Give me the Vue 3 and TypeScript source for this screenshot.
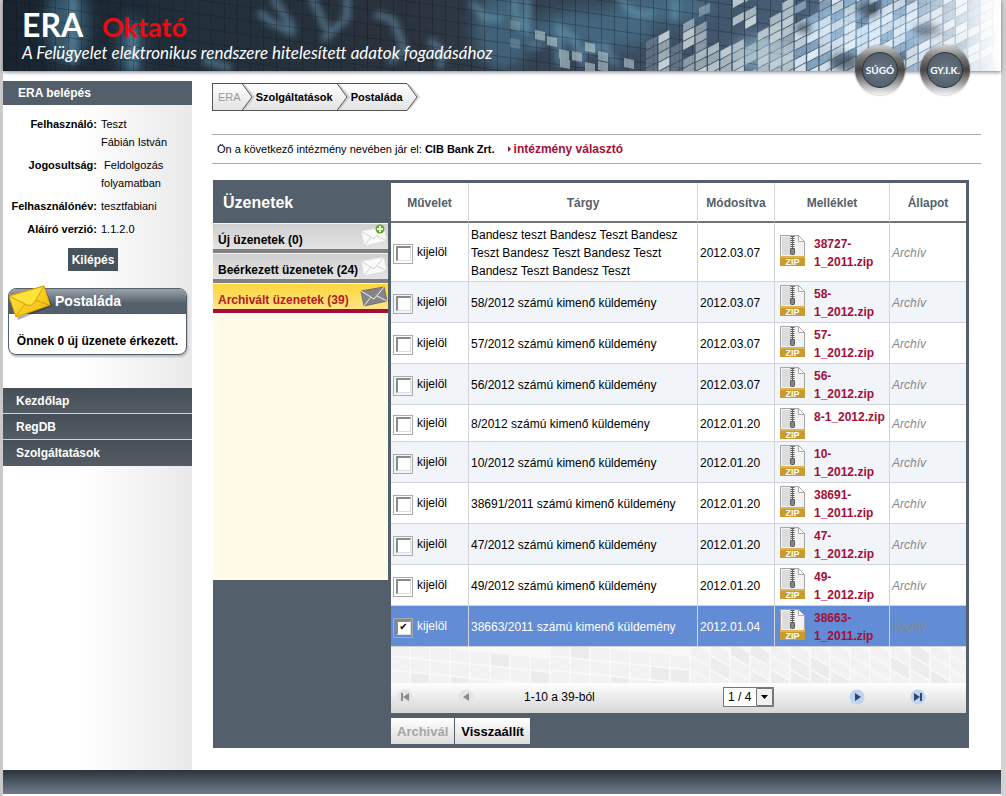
<script setup lang="ts">
import { ref } from 'vue'

interface Message {
  id: number
  subject: string
  modified: string
  file: string
  selected: boolean
}

interface Tile {
  points: string
  fill: string
  opacity: number
}

const messages = ref<Message[]>([
  { id: 1, subject: 'Bandesz teszt Bandesz Teszt Bandesz Teszt Bandesz Teszt Bandesz Teszt Bandesz Teszt Bandesz Teszt', modified: '2012.03.07', file: '38727-1_2011.zip', selected: false },
  { id: 2, subject: '58/2012 számú kimenő küldemény', modified: '2012.03.07', file: '58-1_2012.zip', selected: false },
  { id: 3, subject: '57/2012 számú kimenő küldemény', modified: '2012.03.07', file: '57-1_2012.zip', selected: false },
  { id: 4, subject: '56/2012 számú kimenő küldemény', modified: '2012.03.07', file: '56-1_2012.zip', selected: false },
  { id: 5, subject: '8/2012 számú kimenő küldemény', modified: '2012.01.20', file: '8-1_2012.zip', selected: false },
  { id: 6, subject: '10/2012 számú kimenő küldemény', modified: '2012.01.20', file: '10-1_2012.zip', selected: false },
  { id: 7, subject: '38691/2011 számú kimenő küldemény', modified: '2012.01.20', file: '38691-1_2011.zip', selected: false },
  { id: 8, subject: '47/2012 számú kimenő küldemény', modified: '2012.01.20', file: '47-1_2012.zip', selected: false },
  { id: 9, subject: '49/2012 számú kimenő küldemény', modified: '2012.01.20', file: '49-1_2012.zip', selected: false },
  { id: 10, subject: '38663/2011 számú kimenő küldemény', modified: '2012.01.04', file: '38663-1_2011.zip', selected: true },
])

const folders = [
  { label: 'Új üzenetek (0)', kind: 'new', active: false },
  { label: 'Beérkezett üzenetek (24)', kind: 'inbox', active: false },
  { label: 'Archivált üzenetek (39)', kind: 'archive', active: true },
]

const crumbs = ['ERA', 'Szolgáltatások', 'Postaláda']
const menu = ['Kezdőlap', 'RegDB', 'Szolgáltatások']
const page = ref('1 / 4')

function noise(a: number, b: number): number {
  const v = Math.sin(a * 12.9898 + b * 78.233) * 43758.5453
  return v - Math.floor(v)
}

// First visible height of the mosaic in each 12px column of the banner
const tops = [39, 23, 40, 20, 25, 40, 37, -9, -9, 26, 12, 1, 4, 8, -9, -9, -9, -9, -9, -9, -9, -9, -9, -9, -9, -9, -9, -9, -9]

const tiles: Tile[] = []
tops.forEach((top, c) => {
  const x = 643 + c * 12.4
  for (let r = -1; r < 11; r++) {
    const y = r * 9 - ((c * 6) % 9)
    if (y < top - 4) continue
    const n = noise(c + 1, r + 3)
    if (n < 0.06 || ((c === 7 || c === 8) && y > 18 && y < 36)) continue
    tiles.push({
      points: `${x},${y + 6} ${x + 11},${y} ${x + 11},${y + 8} ${x},${y + 14}`,
      fill: c < 12 ? '#cbd6da' : n > 0.45 ? '#e6f2fc' : '#a9c9e4',
      opacity: c === 0 || c === 2 ? 0.25 : 0.5 + n * 0.45,
    })
  }
})
const strays = [[507, 20], [507, 38], [532, 30], [544, 36], [556, 49], [557, 58], [569, 51], [582, 42], [582, 62], [595, 51], [595, 61], [621, 58]]
strays.forEach(([x, y], i) => {
  tiles.push({ points: `${x},${y} ${x + 10},${y + 2} ${x + 10},${y + 11} ${x},${y + 9}`, fill: '#b9cbd2', opacity: i < 2 ? 0.25 : 0.6 })
})
tiles.push({ points: '696,8 707,3 707,12 696,17', fill: '#aebdc8', opacity: 0.5 })

const strip: Tile[] = []
for (let c = 0; c < 30; c++) {
  for (let r = 0; r < 3; r++) {
    const n = noise(c + 9, r + 5)
    const x = c * 20
    const y = r * 14 - 4 + (c < 15 ? (c % 8) * 2 : 0)
    const slope = c < 15 ? 2 : 10
    strip.push({ points: `${x},${y} ${x + 18},${y + slope} ${x + 18},${y + slope + 12} ${x},${y + 12}`, fill: n > 0.4 ? '#f2f2f2' : '#ececec', opacity: 1 })
  }
}
</script>

<template>
  <div class="page">
    <header class="banner">
      <svg class="art" viewBox="0 0 998 71" preserveAspectRatio="xMaxYMid slice" aria-hidden="true">
        <defs>
          <linearGradient id="sky" x1="0" x2="1" y1="0" y2="0">
            <stop offset="0" stop-color="#18232e" />
            <stop offset=".2" stop-color="#22303c" />
            <stop offset=".4" stop-color="#2a323d" />
            <stop offset=".62" stop-color="#3a4b5e" />
            <stop offset=".8" stop-color="#4a6077" />
            <stop offset="1" stop-color="#7893ab" />
          </linearGradient>
          <linearGradient id="fade" x1="0" x2="1" y1="0" y2="0">
            <stop offset="0" stop-color="#fff" stop-opacity="0" />
            <stop offset="1" stop-color="#fff" />
          </linearGradient>
          <pattern id="grid" width="13" height="14" patternUnits="userSpaceOnUse" patternTransform="skewY(8)">
            <path d="M0 0H13M0 0V14" stroke="#0c131b" stroke-opacity=".6" fill="none" />
          </pattern>
          <filter id="soft" x="-20%" y="-50%" width="140%" height="200%"><feGaussianBlur stdDeviation="3" /></filter>
          <filter id="softer" x="-20%" y="-50%" width="140%" height="200%"><feGaussianBlur stdDeviation="7" /></filter>
        </defs>
        <rect width="998" height="71" fill="url(#sky)" />
        <g filter="url(#softer)" fill="#4d809d" opacity=".55">
          <ellipse cx="64" cy="25" rx="22" ry="40" />
          <ellipse cx="128" cy="48" rx="12" ry="30" />
          <ellipse cx="500" cy="30" rx="30" ry="40" />
          <ellipse cx="590" cy="30" rx="60" ry="20" />
          <ellipse cx="660" cy="8" rx="50" ry="14" />
          <ellipse cx="760" cy="55" rx="30" ry="20" fill="#9ac2dc" />
          <ellipse cx="865" cy="30" rx="60" ry="20" fill="#9cc5e8" />
        </g>
        <g filter="url(#soft)" fill="none" stroke="#6fa0ba" stroke-width="7" opacity=".55">
          <path d="M256 12l12 10 24 12M270 -2l20 30M308 -4l16 34M320 40l24-22V-4M372 14l18 6 12 30-16 12M426 40l12 10v18M468 2l14 16h18M200 60l28 8M70 -2v66M130 30v40" />
          <path d="M512 -4v22l12 12V-4M526 45h14M556 66V28l16 12 8 26M580 52l22-6 12 20M616 -2l16 16h20M672 -2v22" />
        </g>
        <rect width="998" height="71" fill="url(#grid)" />
        <polygon v-for="(t, i) in tiles" :key="i" :points="t.points" :fill="t.fill" :fill-opacity="t.opacity" />
        <g filter="url(#soft)" fill="#27313d" opacity=".6">
          <ellipse cx="866" cy="10" rx="11" ry="8" />
          <ellipse cx="842" cy="62" rx="14" ry="9" />
          <ellipse cx="800" cy="28" rx="8" ry="6" />
          <ellipse cx="925" cy="30" rx="14" ry="6" />
        </g>
        <rect x="900" width="98" height="71" fill="url(#fade)" />
      </svg>
      <div class="brand">
        <h1>ERA <span>Oktató</span></h1>
        <p>A Felügyelet elektronikus rendszere hitelesített adatok fogadásához</p>
      </div>
      <nav class="help" aria-label="Segítség">
        <a href="#sugo"><span>SÚGÓ</span></a>
        <a href="#gyik"><span>GY.I.K.</span></a>
      </nav>
    </header>

    <div class="body">
      <aside class="sidebar">
        <h2>ERA belépés</h2>
        <dl>
          <dt>Felhasználó:</dt>
          <dd>Teszt<br />Fábián István</dd>
          <dt>Jogosultság:</dt>
          <dd>&nbsp;Feldolgozás<br />folyamatban</dd>
          <dt>Felhasználónév:</dt>
          <dd>tesztfabiani</dd>
          <dt>Aláíró verzió:</dt>
          <dd>1.1.2.0</dd>
        </dl>
        <button type="button" class="logout">Kilépés</button>
        <section class="mailbox">
          <h3>Postaláda</h3>
          <svg class="letter" width="44" height="36" viewBox="0 0 44 36" aria-hidden="true">
            <defs>
              <linearGradient id="gold" x1="0" y1="0" x2="1" y2="1">
                <stop offset="0" stop-color="#ffe94a" />
                <stop offset="1" stop-color="#f2b705" />
              </linearGradient>
            </defs>
            <path d="M3 12L37 2L44 21L10 35Z" fill="#000" fill-opacity=".3" />
            <path d="M1 11L36 1L42 20L8 32Z" fill="url(#gold)" stroke="#e0a800" />
            <path d="M8 31L18 18M41 20L27 15" fill="none" stroke="#d99c00" />
            <path d="M1 11L36 1L26 18Q23 22 19 20Z" fill="#ffe23a" stroke="#d79a00" />
          </svg>
          <p>Önnek 0 új üzenete érkezett.</p>
        </section>
        <nav class="menu" aria-label="Főmenü">
          <a v-for="m in menu" :key="m" href="#">{{ m }}</a>
        </nav>
      </aside>

      <main>
        <ol class="crumbs">
          <li v-for="(c, i) in crumbs" :key="c">
            <a href="#" :class="{ root: i === 0 }">{{ c }}</a>
            <svg width="14" height="28" viewBox="0 0 14 28" aria-hidden="true">
              <defs>
                <linearGradient id="crumb" x1="0" x2="0" y1="0" y2="1">
                  <stop offset="0" stop-color="#fff" />
                  <stop offset="1" stop-color="#e2e2e2" />
                </linearGradient>
              </defs>
              <path v-if="i < 2" d="M0 0H14V28H0Z" fill="url(#crumb)" />
              <path d="M3 2L13 14L3 26" fill="none" stroke="#bbb" stroke-width="2" opacity=".6" />
              <path d="M0 .5H1L11 14L1 27.5H0" fill="url(#crumb)" stroke="#555" />
              <path v-if="i < 2" d="M0 .5H14M0 27.5H14" stroke="#555" />
            </svg>
          </li>
        </ol>

        <p class="institution">
          Ön a következő intézmény nevében jár el: <strong>CIB Bank Zrt.</strong>
          <a href="#valaszto">intézmény választó</a>
        </p>

        <section class="frame">
          <nav class="folders" aria-label="Üzenetek">
            <h2>Üzenetek</h2>
            <ul>
              <li v-for="f in folders" :key="f.kind" :class="{ active: f.active }">
                <a href="#">
                  <span>{{ f.label }}</span>
                  <svg width="28" height="24" viewBox="0 0 28 24" aria-hidden="true">
                    <g :fill="f.active ? '#858585' : '#fafafa'" :stroke="f.active ? '#6e6e6e' : '#dedede'">
                      <path d="M1 7L24 3L27 17L4 22Z" />
                      <path d="M1 7L14 15L24 3M4 22L11 13M27 17L17 12" :stroke="f.active ? '#eee' : '#d2d2d2'" fill="none" />
                    </g>
                    <g v-if="f.kind === 'new'">
                      <circle cx="20" cy="5" r="4.500" fill="#67a52d" />
                      <path d="M20 2V8M17 5H23" stroke="#e6f4d8" stroke-width="2" />
                    </g>
                  </svg>
                </a>
              </li>
            </ul>
          </nav>

          <div class="list">
            <table>
              <colgroup>
                <col class="c-action" /><col /><col class="c-date" /><col class="c-file" /><col class="c-state" />
              </colgroup>
              <thead>
                <tr>
                  <th>Művelet</th><th>Tárgy</th><th>Módosítva</th><th>Melléklet</th><th>Állapot</th>
                </tr>
              </thead>
              <tbody>
                <tr v-for="m in messages" :key="m.id" :class="{ selected: m.selected }">
                  <td>
                    <label class="pick"><input v-model="m.selected" type="checkbox" /><span>kijelöl</span></label>
                  </td>
                  <td>{{ m.subject }}</td>
                  <td>{{ m.modified }}</td>
                  <td>
                    <a class="file" href="#">
                      <svg width="27" height="32" viewBox="0 0 27 32" aria-hidden="true">
                        <path d="M1.500 .5H19.500L25.500 6.500V30.500H1.500Z" fill="#f2f2f2" stroke="#a5a5a5" />
                        <path d="M3 2H12V20H3Z" fill="#dcdcdc" />
                        <path d="M19.500 .5V6.500H25.500Z" fill="#fff" stroke="#aaa" />
                        <path d="M13.500 1V14" stroke="#555" stroke-width="4" stroke-dasharray="1 1" />
                        <path d="M13.500 1V14" stroke="#666" />
                        <rect x="11.500" y="13.500" width="4" height="6" rx="1" fill="#888" stroke="#555" />
                        <path d="M1 21H26V31H1Z" fill="#c99a2e" />
                        <path d="M1 21H26V23H1Z" fill="#dcb34e" />
                        <text x="13.500" y="30" text-anchor="middle">ZIP</text>
                      </svg>
                      <span>{{ m.file }}</span>
                    </a>
                  </td>
                  <td class="state">Archív</td>
                </tr>
              </tbody>
            </table>

            <svg class="strip" viewBox="0 0 575 36" preserveAspectRatio="xMinYMin slice" aria-hidden="true">
              <polygon v-for="(t, i) in strip" :key="i" :points="t.points" :fill="t.fill" :fill-opacity="t.opacity" />
            </svg>

            <div class="pager">
              <button type="button" disabled aria-label="Első oldal">
                <svg width="16" height="16" viewBox="0 0 16 16"><circle cx="8" cy="8" r="7.500" fill="#e4e4e4" /><path d="M4 4H6V12H4ZM12 4V12L6 8Z" fill="#8b8b8b" /></svg>
              </button>
              <button type="button" disabled aria-label="Előző oldal">
                <svg width="16" height="16" viewBox="0 0 16 16"><circle cx="8" cy="8" r="7.500" fill="#e4e4e4" /><path d="M11 4V12L5 8Z" fill="#8b8b8b" /></svg>
              </button>
              <span class="range">1-10 a 39-ból</span>
              <span class="select">
                <select v-model="page" aria-label="Oldal">
                  <option>1 / 4</option><option>2 / 4</option><option>3 / 4</option><option>4 / 4</option>
                </select>
                <svg width="17" height="18" viewBox="0 0 17 18" aria-hidden="true"><path d="M.5 .5H16.500V17.500H.5Z" fill="#f0f0ee" stroke="#777" /><path d="M5 7H12L8.500 11Z" fill="#000" /></svg>
              </span>
              <button type="button" aria-label="Következő oldal">
                <svg width="16" height="16" viewBox="0 0 16 16"><circle cx="8" cy="8" r="7.500" fill="#bcd3f3" /><path d="M6 4V12L12 8Z" fill="#33475f" /></svg>
              </button>
              <button type="button" aria-label="Utolsó oldal">
                <svg width="16" height="16" viewBox="0 0 16 16"><circle cx="8" cy="8" r="7.500" fill="#bcd3f3" /><path d="M4 4V12L10 8ZM10 4H12V12H10Z" fill="#33475f" /></svg>
              </button>
            </div>

            <div class="actions">
              <button type="button" disabled>Archivál</button>
              <button type="button">Visszaállít</button>
            </div>
          </div>
        </section>
      </main>
    </div>

    <footer></footer>
  </div>
</template>

<style>
body {
  background: #fff;
}
</style>

<style scoped>
* {
  box-sizing: border-box;
}
.page {
  border: solid #c9c9c9;
  border-width: 0 5px 0 3px;
  border-right-color: #d2d2d2;
  padding-bottom: 2px;
  background: #fff;
  font: 12px/18px "Liberation Sans", Arial, sans-serif;
  color: #000;
}
h1, h2, h3, p, dl, dd, ul, ol {
  margin: 0;
  padding: 0;
}
ul, ol {
  list-style: none;
}
a {
  color: inherit;
  text-decoration: none;
}
button {
  font-family: inherit;
  border: 0;
  padding: 0;
}

.banner {
  position: relative;
  height: 71px;
  box-shadow: 0 1px 4px #777;
}
.art {
  position: absolute;
  width: 100%;
  height: 71px;
}
.brand {
  position: relative;
  padding: 8px 0 0 19px;
  font-family: Lato, sans-serif;
  color: #fff;
}
h1 {
  font-size: 32px;
  line-height: 34px;
}
h1 span {
  margin-left: 12px;
  font-size: 27px;
  color: #ed0b12;
}
.brand p {
  font-size: 17px;
  line-height: 18px;
  font-style: italic;
}
.help {
  position: absolute;
  top: 45px;
  right: 31px;
  display: flex;
  gap: 15px;
}
.help a {
  display: grid;
  width: 50px;
  height: 50px;
  padding: 7px;
  border-radius: 50%;
  background: linear-gradient(#d0d0d0, #777 25%, #444 50%, #8a8a8a 70%, #f4f4f4);
  box-shadow: 0 0 2px #888;
}
.help span {
  display: grid;
  place-items: center;
  border: 1px solid #2c3138;
  border-radius: 50%;
  background: radial-gradient(#6b7885, #4b5662);
  color: #fff;
  font: bold 10px/14px Lato, sans-serif;
}

.body {
  display: flex;
  padding-top: 10px;
}
.sidebar {
  flex: 0 0 189px;
  background: linear-gradient(90deg, #fff 40%, #e9e9e9);
}
.sidebar h2 {
  padding: 1px 15px 0;
  background: #535f6a;
  color: #fff;
  font-size: 12px;
  line-height: 23px;
}
dl {
  display: grid;
  grid-template-columns: 94px 1fr;
  gap: 5px 4px;
  padding-top: 10px;
  font-size: 11px;
}
dt {
  font-weight: bold;
  text-align: right;
  white-space: nowrap;
}
.logout {
  display: block;
  width: 50px;
  height: 23px;
  margin: 10px 0 0 65px;
  background: #48525b;
  color: #fff;
  font-size: 12px;
  font-weight: bold;
}
.mailbox {
  position: relative;
  margin: 17px 5px 0;
  border: 1px solid #535f6a;
  border-radius: 8px;
  background: #fff;
  box-shadow: 1px 2px 2px #bbb;
}
.mailbox h3 {
  padding-left: 46px;
  border-radius: 7px 7px 0 0;
  background: linear-gradient(#9aa1a9, #535f6a 60%);
  color: #fff;
  font: bold 14px/25px "Liberation Sans", sans-serif;
}
.letter {
  position: absolute;
  top: -4px;
  left: -1px;
}
.mailbox p {
  padding: 18px 0 4px;
  text-align: center;
  font-weight: bold;
}
.menu {
  margin-top: 33px;
}
.menu a {
  display: block;
  padding: 2px 0 0 13px;
  border-bottom: 1px solid #cfd3d6;
  background: linear-gradient(#464f57, #535c65);
  color: #fff;
  font-weight: bold;
  line-height: 23px;
}
.menu a:last-child {
  border-bottom: 0;
  padding-bottom: 1px;
}

main {
  flex: 1;
  min-width: 0;
  padding: 2px 20px 22px;
}
.crumbs {
  display: flex;
}
.crumbs li {
  display: flex;
  font-size: 11px;
}
.crumbs a {
  padding: 1px 3px 0 1px;
  border: solid #555;
  border-width: 1px 0;
  background: linear-gradient(#fff, #e2e2e2);
  font-weight: bold;
  line-height: 25px;
}
.crumbs .root {
  padding: 1px 0 0 5px;
  border-left-width: 1px;
  color: #999;
  font-weight: normal;
}
.institution {
  margin-top: 23px;
  padding: 5px;
  border: solid #aaa;
  border-width: 1px 0;
  font-size: 11px;
}
.institution a {
  margin-left: 13px;
  color: #a30f37;
  font-size: 12px;
  font-weight: bold;
}
.institution a::before {
  content: "";
  display: inline-block;
  margin: 0 3px 1px 0;
  border: solid transparent;
  border-width: 3px 0 3px 3px;
  border-left-color: #a30f37;
}

.frame {
  display: grid;
  grid-template-columns: 175px 1fr;
  gap: 3px;
  margin: 16px 12px 0 1px;
  padding: 3px 3px 4px 0;
  background: #535f6a;
}
.folders h2 {
  padding-left: 10px;
  color: #fff;
  font-size: 16px;
  line-height: 40px;
}
.folders ul {
  min-height: 357px;
  background: #fffbe8;
}
.folders li {
  height: 30px;
  border-top: 1px solid #f4f4f4;
  border-bottom: 4px solid #808080;
  background: linear-gradient(#cfcfcf, #e3e3e3);
  font-weight: bold;
}
.folders a {
  display: flex;
  justify-content: space-between;
  height: 25px;
  padding-left: 5px;
  white-space: nowrap;
}
.folders a span {
  padding-top: 7px;
}
.folders .active {
  border-bottom-color: #a00f37;
  background: linear-gradient(#fdd63c, #ffe487);
  color: #b0201e;
}
.list {
  min-width: 0;
}
table {
  width: 100%;
  table-layout: fixed;
  border-collapse: separate;
  border-spacing: 0;
  background: #fff;
}
.c-action {
  width: 78px;
}
.c-date {
  width: 77px;
}
.c-file {
  width: 115px;
}
.c-state {
  width: 76px;
}
th {
  height: 40px;
  padding: 1px 0 0;
  border-right: 1px solid #d5d5d5;
  border-bottom: 2px solid #747474;
  color: #535f6a;
}
td {
  padding: 3px 2px 1px;
  border-right: 1px solid #d0d4d9;
  border-bottom: 1px solid #d0d4d9;
}
th:last-child,
td:last-child {
  border-right: 0;
}
tbody tr:nth-child(even) {
  background: #f1f5fa;
}
tbody tr.selected {
  background: #628cd5;
  color: #fff;
}
.pick {
  display: flex;
  gap: 4px;
}
.pick span {
  padding-bottom: 3px;
}
.pick input {
  appearance: none;
  display: grid;
  place-items: center;
  width: 20px;
  height: 20px;
  margin: 1px 0 0;
  border: 1px solid #aaa;
}
.pick input::before {
  content: "";
  width: 12px;
  height: 12px;
  border: solid;
  border-width: 2px 1px 1px 2px;
  border-color: #8a8a8a #ddd #ddd #8a8a8a;
  background: #fff;
}
.pick input:checked::before {
  content: "✔";
  color: #000;
  font: 10px/9px "DejaVu Sans", sans-serif;
  text-align: center;
}
.file {
  display: flex;
  align-items: flex-start;
  gap: 8px;
  padding-left: 2px;
  color: #a30f37;
  font-weight: bold;
}
.file svg {
  flex: none;
}
.file text {
  fill: #fff;
  font: bold 9px "Liberation Sans", sans-serif;
}
.state {
  color: #888;
  font-style: italic;
}
.strip {
  display: block;
  width: 100%;
  height: 36px;
  background: #f8f8f8;
}
.pager {
  display: flex;
  align-items: center;
  gap: 33px;
  height: 30px;
  padding: 0 34px 3px 0;
  background: linear-gradient(#fff, #d6d6d6);
}
.pager button {
  display: grid;
  place-items: center;
  width: 28px;
  height: 20px;
  background: none;
}
.range {
  margin-left: 11px;
}
.select {
  position: relative;
  margin: 0 36px 0 auto;
}
.select select {
  display: block;
  appearance: none;
  width: 51px;
  height: 20px;
  padding: 0 0 0 4px;
  border: 1px solid #777;
  border-radius: 0;
  background: #fff;
  color: #000;
  font: 12px/18px "Liberation Sans", Arial, sans-serif;
}
.select svg {
  position: absolute;
  top: 1px;
  right: 1px;
  pointer-events: none;
}
.actions {
  display: flex;
  gap: 1px;
  padding-top: 5px;
}
.actions button {
  height: 26px;
  padding: 0 6px;
  background: linear-gradient(#fff, #dcdcdc);
  color: #000;
  font-size: 13px;
  font-weight: bold;
}
.actions button:disabled {
  color: #a5a5a5;
}
footer {
  height: 24px;
  background: linear-gradient(#2b343d, #6e7b8b);
}
</style>
